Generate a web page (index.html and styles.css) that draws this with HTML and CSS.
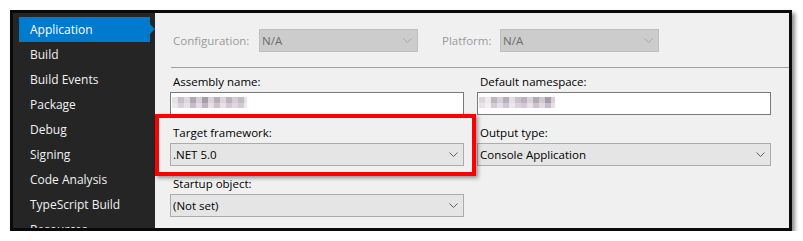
FILE: index.html
```html
<!DOCTYPE html>
<html>
<head>
<meta charset="utf-8">
<link rel="stylesheet" href="styles.css">
</head>
<body>
<div class="frame">
  <nav class="sidebar">
    <div class="nav-item active">Application</div>
    <div class="nav-item">Build</div>
    <div class="nav-item">Build Events</div>
    <div class="nav-item">Package</div>
    <div class="nav-item">Debug</div>
    <div class="nav-item">Signing</div>
    <div class="nav-item">Code Analysis</div>
    <div class="nav-item">TypeScript Build</div>
    <div class="nav-item">Resources</div>
  </nav>
  <main class="content">
    <div class="config-row">
      <span class="cfg-label cfg-conf">Configuration:</span>
      <div class="select disabled cfg-select">
        <span class="select-text">N/A</span>
        <svg class="chev" width="9" height="5" viewBox="0 0 9 5"><polyline points="0.5,0.5 4.5,4.5 8.5,0.5" fill="none" stroke="currentColor" stroke-width="1"/></svg>
      </div>
      <span class="cfg-label cfg-plat">Platform:</span>
      <div class="select disabled cfg-select">
        <span class="select-text">N/A</span>
        <svg class="chev" width="9" height="5" viewBox="0 0 9 5"><polyline points="0.5,0.5 4.5,4.5 8.5,0.5" fill="none" stroke="currentColor" stroke-width="1"/></svg>
      </div>
    </div>
    <div class="sep"></div>
    <div class="grid">
      <div class="field">
        <label class="field-label">Assembly name:</label>
        <div class="textbox"><span class="blur blur-a"></span></div>
      </div>
      <div class="field">
        <label class="field-label">Default namespace:</label>
        <div class="textbox"><span class="blur blur-b"></span></div>
      </div>
      <div class="field">
        <label class="field-label">Target framework:</label>
        <div class="select">
          <span class="select-text">.NET 5.0</span>
          <svg class="chev" width="9" height="5" viewBox="0 0 9 5"><polyline points="0.5,0.5 4.5,4.5 8.5,0.5" fill="none" stroke="currentColor" stroke-width="1"/></svg>
        </div>
      </div>
      <div class="field">
        <label class="field-label">Output type:</label>
        <div class="select">
          <span class="select-text">Console Application</span>
          <svg class="chev" width="9" height="5" viewBox="0 0 9 5"><polyline points="0.5,0.5 4.5,4.5 8.5,0.5" fill="none" stroke="currentColor" stroke-width="1"/></svg>
        </div>
      </div>
      <div class="field">
        <label class="field-label">Startup object:</label>
        <div class="select">
          <span class="select-text">(Not set)</span>
          <svg class="chev" width="9" height="5" viewBox="0 0 9 5"><polyline points="0.5,0.5 4.5,4.5 8.5,0.5" fill="none" stroke="currentColor" stroke-width="1"/></svg>
        </div>
      </div>
    </div>
    <div class="highlight"></div>
  </main>
</div>
</body>
</html>
```

FILE: styles.css
```css
html, body {
  margin: 0;
  padding: 0;
  background: #ffffff;
}
body {
  font-family: "Open Sans", "Noto Sans", "Liberation Sans", sans-serif;
  font-size: 11.5px;
  color: #1e1e1e;
}
.frame {
  margin: 10px 0 0 10px;
  width: 782px;
  height: 221px;
  box-sizing: border-box;
  border: 3px solid #0a0a0a;
  box-shadow: 3px 3px 4px rgba(0, 0, 0, 0.45);
  display: flex;
  overflow: hidden;
}
.sidebar {
  width: 142px;
  flex: none;
  background: #252526;
  padding: 4px 0 0 6px;
  box-sizing: border-box;
  overflow: hidden;
}
.nav-item {
  position: relative;
  width: 131px;
  height: 25px;
  line-height: 25px;
  padding-left: 11px;
  box-sizing: border-box;
  color: #f1f1f1;
  font-size: 12px;
  white-space: nowrap;
}
.nav-item.active {
  background: #007acc;
  color: #ffffff;
}
.nav-item.active::after {
  content: "";
  position: absolute;
  right: -5px;
  top: 7px;
  border-left: 5px solid #007acc;
  border-top: 5.5px solid transparent;
  border-bottom: 5.5px solid transparent;
}
.content {
  position: relative;
  flex: 1;
  background: #f0f0f0;
  padding: 16px 0 0 15px;
  box-sizing: border-box;
}
.config-row {
  display: flex;
  align-items: center;
  height: 23px;
}
.cfg-label {
  color: #9a9a9a;
  white-space: nowrap;
}
.cfg-conf {
  width: 86px;
  margin-left: 3px;
  flex: none;
}
.cfg-plat {
  width: 58px;
  margin-left: 24px;
  flex: none;
}
.select {
  height: 23px;
  box-sizing: border-box;
  border: 1px solid #acacac;
  background: #e5e5e5;
  display: flex;
  align-items: center;
  justify-content: space-between;
  padding: 0 5px 0 2px;
  color: #000000;
}
.select .chev {
  color: #606060;
  display: block;
}
.select.disabled {
  background: #cccccc;
  border-color: #bfbfbf;
  color: #6d6d6d;
}
.select.disabled .chev {
  color: #a6a6a6;
}
.cfg-select {
  width: 159px;
  flex: none;
}
.sep {
  height: 1px;
  background: #a0a0a0;
  margin: 15px 0 5px 1px;
}
.grid {
  display: grid;
  grid-template-columns: 294px 294px;
  column-gap: 13px;
  row-gap: 9px;
}
.field {
  display: flex;
  flex-direction: column;
}
.field-label {
  height: 18px;
  line-height: 18px;
  margin-bottom: 1px;
  padding-left: 3px;
  color: #000000;
  white-space: nowrap;
}
.textbox {
  height: 23px;
  box-sizing: border-box;
  border: 1px solid #7a7a7a;
  background: #ffffff;
  padding: 4px 0 0 1px;
}
.blur {
  display: block;
  height: 11px;
}
.blur-a {
  width: 75px;
  background:
    linear-gradient(90deg, #e4e0e4 0 6px, #c9c0c9 6px 12px, #ddd8de 12px 18px, #b3a7b4 18px 24px, #d6cfd7 24px 30px, #a89aa9 30px 36px, #d8d2d8 36px 42px, #b9adb9 42px 48px, #dcd6dc 48px 54px, #bdb2be 54px 60px, #d3ccd4 60px 66px, #c4bac4 66px 72px, #e6e2e6 72px 75px) top / 100% 6px no-repeat,
    linear-gradient(90deg, #ebe8eb 0 6px, #d7d1d7 6px 12px, #e6e3e6 12px 18px, #c7bdc7 18px 24px, #e1dce1 24px 30px, #bfb4c0 30px 36px, #e3dfe3 36px 42px, #cbc2cb 42px 48px, #e5e1e5 48px 54px, #d0c8d0 54px 60px, #dfdadf 60px 66px, #d2cad2 66px 72px, #eeebee 72px 75px) bottom / 100% 5px no-repeat;
}
.blur-b {
  width: 76px;
  background:
    linear-gradient(90deg, #d9d6dc 0 6px, #ece9ec 6px 12px, #bdb6c2 12px 18px, #d7d2d9 18px 24px, #b8afbd 24px 30px, #e2dee3 30px 36px, #c9c1cb 36px 42px, #bfb1c0 42px 48px, #d9d4da 48px 54px, #b7aab5 54px 60px, #cec8d0 60px 66px, #a99ba9 66px 72px, #d8d2d8 72px 76px) top / 100% 6px no-repeat,
    linear-gradient(90deg, #e6e4e8 0 6px, #f2f0f2 6px 12px, #d2ccd6 12px 18px, #e4e0e5 18px 24px, #cfc8d3 24px 30px, #ebe8eb 30px 36px, #d9d3db 36px 42px, #d3c9d4 42px 48px, #e6e2e6 48px 54px, #cdc3cb 54px 60px, #dfdae0 60px 66px, #c6bbc6 66px 72px, #e6e1e6 72px 76px) bottom / 100% 5px no-repeat;
}
.highlight {
  position: absolute;
  left: 0;
  top: 101px;
  width: 321px;
  height: 62px;
  box-sizing: border-box;
  border: 4px solid #ff0000;
  box-shadow: 2px 2px 4px rgba(0, 0, 0, 0.4);
  pointer-events: none;
}
```
